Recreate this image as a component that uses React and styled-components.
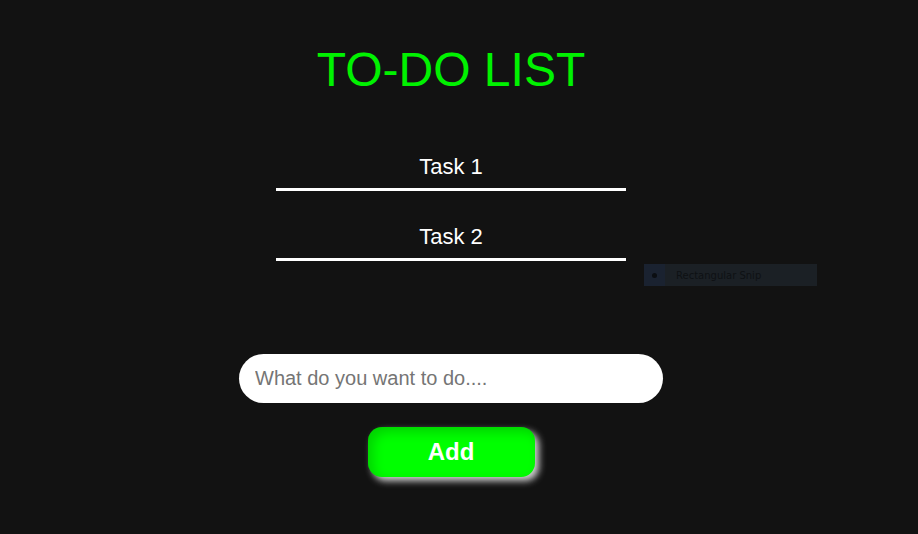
import React from "react";
import styled, { createGlobalStyle } from "styled-components";

const GlobalStyle = createGlobalStyle`
  html, body {
    margin: 0;
    padding: 0;
    background: #121212;
    font-family: "Liberation Sans", Arial, sans-serif;
  }
`;

const tasks = ["Task 1", "Task 2"];

const App = () => {
  return (
    <>
      <GlobalStyle />
      <Page>
        <Title>TO-DO LIST</Title>
        <TaskList>
          {tasks.map((task) => (
            <TaskItem key={task}>{task}</TaskItem>
          ))}
        </TaskList>
        <TaskInput placeholder="What do you want to do...." autoFocus />
        <AddButton>Add</AddButton>
      </Page>
      <SnipTip>
        <SnipIcon>
          <span />
        </SnipIcon>
        Rectangular Snip
      </SnipTip>
    </>
  );
};

export default App;

const Page = styled.div`
  width: 902px;
  min-height: 534px;
  box-sizing: border-box;
  padding-top: 46px;
  display: flex;
  flex-direction: column;
  align-items: center;
`;

const Title = styled.h1`
  margin: 0;
  font-size: 48px;
  line-height: 48px;
  font-weight: normal;
  color: #00f200;
`;

const TaskList = styled.div`
  margin-top: 61px;
  display: flex;
  flex-direction: column;
  gap: 34px;
`;

const TaskItem = styled.div`
  width: 350px;
  padding-bottom: 9px;
  border-bottom: 3px solid #ffffff;
  text-align: center;
  color: #ffffff;
  font-size: 22px;
  line-height: 24px;
`;

const TaskInput = styled.input`
  margin-top: 93px;
  width: 424px;
  height: 49px;
  box-sizing: border-box;
  border: none;
  outline: none;
  border-radius: 25px;
  background: #ffffff;
  padding: 0 16px;
  font-family: "Liberation Sans", Arial, sans-serif;
  font-size: 20px;
  color: #222;
  caret-color: #000;
  &::placeholder {
    color: #757575;
  }
`;

const AddButton = styled.button`
  margin-top: 24px;
  width: 167px;
  height: 50px;
  border: none;
  border-radius: 14px;
  background: #00ff00;
  color: #ffffff;
  font-family: "Liberation Sans", Arial, sans-serif;
  font-size: 24px;
  font-weight: bold;
  cursor: pointer;
  box-shadow: 4px 4px 7px rgba(230, 230, 230, 0.9),
    inset 5px 5px 12px rgba(0, 0, 0, 0.18);
`;

const SnipTip = styled.div`
  position: absolute;
  left: 644px;
  top: 264px;
  width: 173px;
  height: 22px;
  display: flex;
  align-items: center;
  gap: 11px;
  background: #1b2025;
  color: #0e1114;
  font-family: "DejaVu Sans", sans-serif;
  font-size: 10px;
`;

const SnipIcon = styled.div`
  width: 21px;
  height: 22px;
  background: #1a2230;
  display: flex;
  align-items: center;
  justify-content: center;
  span {
    width: 5px;
    height: 5px;
    border-radius: 50%;
    background: #0b0e12;
  }
`;
